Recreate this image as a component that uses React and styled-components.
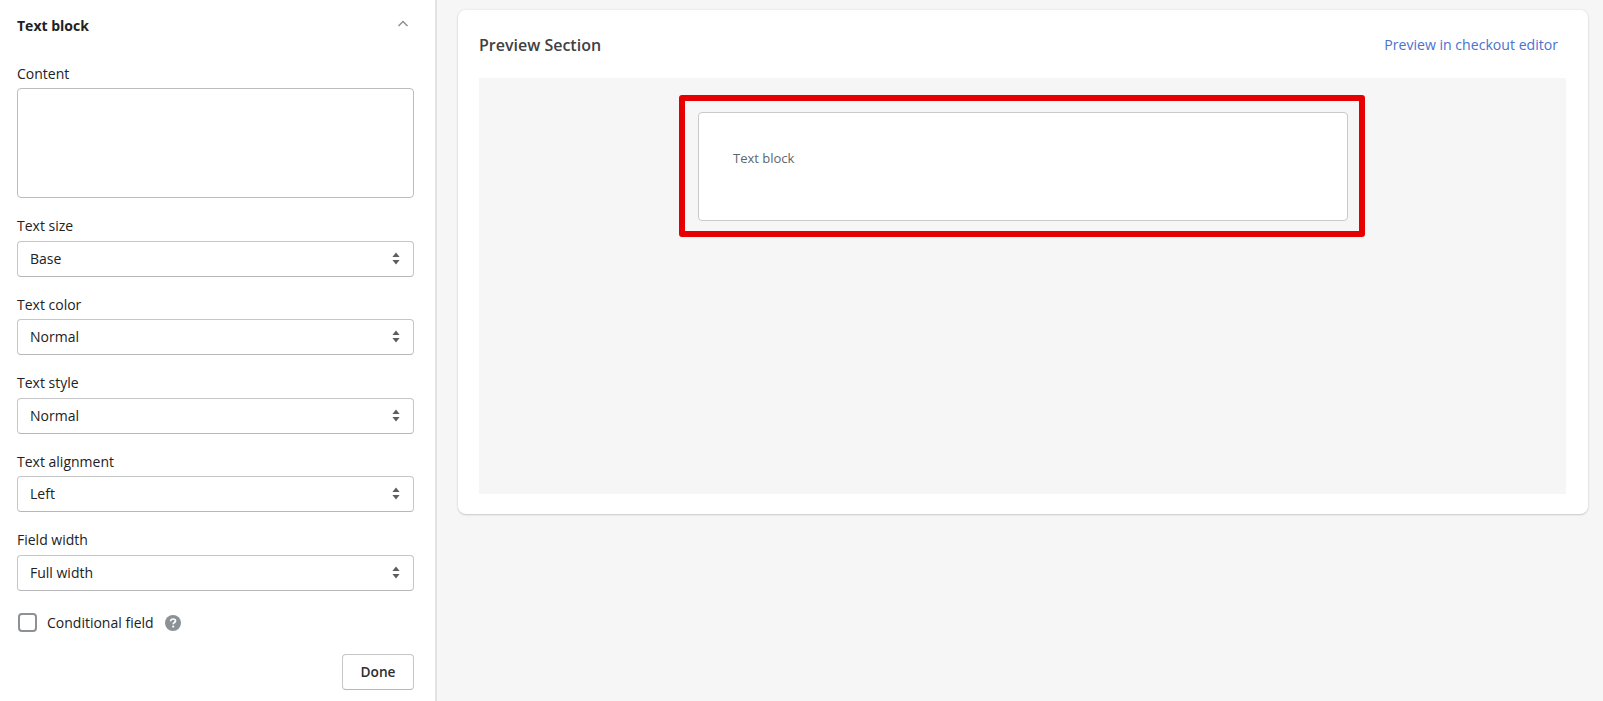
import React from "react";
import styled, { createGlobalStyle } from "styled-components";

const Global = createGlobalStyle`
  html, body { margin: 0; padding: 0; height: 100%; background: #f6f6f6; overflow: hidden; }
  * { box-sizing: border-box; }
  body { font-family: "Open Sans", "Noto Sans", sans-serif; font-size: 14px; color: #202223; }
`;

const Page = styled.div`
  display: flex;
  width: 1603px;
  height: 701px;
  overflow: hidden;
`;
const Sidebar = styled.aside`
  width: 437px;
  height: 701px;
  flex: none;
  background: #fff;
  border-right: 2px solid #e3e3e3;
  padding: 16px 21px 0 17px;
`;
const SectionHeader = styled.div`
  display: flex;
  align-items: center;
  justify-content: space-between;
  height: 20px;
  margin-bottom: 28px;
`;
const SectionTitle = styled.h2`
  margin: 0;
  font-size: 14px;
  line-height: 20px;
  font-weight: 700;
  color: #202223;
`;
const Collapse = styled.span`
  display: flex;
  margin: -5px 5px 0 0;
  color: #8c9196;
`;
const Field = styled.div`
  margin-bottom: 18px;
`;
const Label = styled.label`
  display: block;
  font-size: 14px;
  line-height: 20px;
  margin-bottom: ${(p) => (p.$tight ? "3.5px" : "4.5px")};
  color: #202223;
`;
const TextArea = styled.div`
  height: 110.5px;
  background: #fff;
  border: 1px solid #bcbcbc;
  border-radius: 4px;
`;
const Select = styled.div`
  height: 36px;
  display: flex;
  align-items: center;
  justify-content: space-between;
  padding: 0 13px 0.5px 12px;
  background: #fff;
  border: 1px solid #c4c6c8;
  border-bottom-color: #b5b7b9;
  border-radius: 4px;
  font-size: 14px;
`;
const CheckRow = styled.div`
  display: flex;
  align-items: center;
  height: 20px;
  margin: 22px 0 21px 1px;
`;
const Checkbox = styled.span`
  width: 19px;
  height: 19px;
  border: 2px solid #8c9196;
  border-radius: 4px;
  margin-right: 10px;
  background: #fff;
`;
const CheckLabel = styled.span`
  font-size: 14px;
  margin-right: 11px;
  color: #202223;
`;
const Actions = styled.div`
  display: flex;
  justify-content: flex-end;
`;
const DoneButton = styled.button`
  width: 72px;
  height: 36px;
  background: #fff;
  border: 1px solid #c4c6c8;
  border-bottom-color: #b5b7b9;
  border-radius: 4px;
  font: 600 13.7px "Open Sans", "Noto Sans", sans-serif;
  color: #2c2e30;
  padding: 0;
`;
const Main = styled.main`
  flex: 1;
  padding: 10px 15px 0 21px;
`;
const Card = styled.section`
  width: 1130px;
  height: 504px;
  background: #fff;
  border-radius: 8px;
  box-shadow: 0 0 3px rgba(23, 24, 24, 0.08), 0 1px 2px rgba(0, 0, 0, 0.16);
  padding: 0 22px 20px 21px;
  display: flex;
  flex-direction: column;
`;
const CardHeader = styled.header`
  height: 68px;
  flex: none;
  display: flex;
  align-items: center;
  justify-content: space-between;
  padding: 1px 8px 0 0;
`;
const CardTitle = styled.h2`
  margin: 0;
  font-size: 16px;
  font-weight: 600;
  color: #3f4143;
`;
const Link = styled.a`
  font-size: 14.1px;
  color: #4a72cf;
  text-decoration: none;
`;
const Canvas = styled.div`
  flex: 1;
  background: #f6f6f6;
  padding-top: 17px;
  display: flex;
  flex-direction: column;
  align-items: center;
`;
const Highlight = styled.div`
  width: 686px;
  height: 142px;
  margin-right: 1px;
  border: 6px solid #e60000;
  border-radius: 3px;
  padding: 11px 11px 10px 13px;
`;
const PreviewBox = styled.div`
  height: 100%;
  background: #fff;
  border: 1px solid #c9cacc;
  border-radius: 4px;
  padding: 35px 34px;
  font-size: 13px;
  line-height: 20px;
  color: #5c6770;
`;

const Sort = () => (
  <svg width="8" height="13" viewBox="0 0 8 13" aria-hidden="true">
    <path d="M4 0.5 L7.6 5 H0.4 Z M4 12.5 L0.4 8 H7.6 Z" fill="#5c5f62" />
  </svg>
);

const fields = [
  ["Text size", "Base"],
  ["Text color", "Normal"],
  ["Text style", "Normal"],
  ["Text alignment", "Left"],
  ["Field width", "Full width"],
];

export default function App() {
  return (
    <Page>
      <Global />
      <Sidebar>
        <SectionHeader>
          <SectionTitle>Text block</SectionTitle>
          <Collapse>
            <svg width="12" height="8" viewBox="0 0 12 8" fill="none" stroke="currentColor" strokeWidth="1.5" aria-hidden="true">
              <path d="M1.5 6 L6 1.5 L10.5 6" />
            </svg>
          </Collapse>
        </SectionHeader>
        <Field>
          <Label $tight>Content</Label>
          <TextArea />
        </Field>
        {fields.map(([label, value]) => (
          <Field key={label}>
            <Label>{label}</Label>
            <Select>
              {value}
              <Sort />
            </Select>
          </Field>
        ))}
        <CheckRow>
          <Checkbox />
          <CheckLabel>Conditional field</CheckLabel>
          <svg width="16" height="16" viewBox="0 0 16 16" aria-hidden="true">
            <circle cx="8" cy="8" r="8" fill="#8c9196" />
            <path d="M5.6 6.2 C5.7 4.8 6.8 4 8.1 4 C9.5 4 10.5 4.9 10.5 6 C10.5 7.5 8.2 7.6 8.2 9.2" fill="none" stroke="#fff" strokeWidth="1.7" />
            <circle cx="8.2" cy="11.6" r="1.1" fill="#fff" />
          </svg>
        </CheckRow>
        <Actions>
          <DoneButton>Done</DoneButton>
        </Actions>
      </Sidebar>
      <Main>
        <Card>
          <CardHeader>
            <CardTitle>Preview Section</CardTitle>
            <Link>Preview in checkout editor</Link>
          </CardHeader>
          <Canvas>
            <Highlight>
              <PreviewBox>Text block</PreviewBox>
            </Highlight>
          </Canvas>
        </Card>
      </Main>
    </Page>
  );
}
